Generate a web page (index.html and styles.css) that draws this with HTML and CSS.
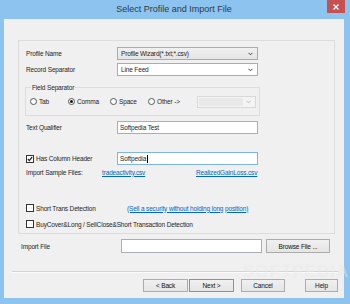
FILE: index.html
```html
<!DOCTYPE html>
<html>
<head>
<meta charset="utf-8">
<title>Select Profile and Import File</title>
<link rel="stylesheet" href="styles.css">
</head>
<body>
<div class="window">
  <div class="titlebar">
    <span class="title">Select Profile and Import File</span>
    <div class="close"><svg width="6" height="6" viewBox="0 0 6 6"><path d="M0.5 0.5 L5.5 5.5 M5.5 0.5 L0.5 5.5" stroke="#fff" stroke-width="1.4"/></svg></div>
  </div>
  <div class="client">
    <div class="group">
      <div class="row r1">
        <span class="lbl">Profile Name</span>
        <div class="select gray"><span>Profile Wizard(*.txt;*.csv)</span><svg class="chev" width="5" height="4" viewBox="0 0 5 4"><path d="M0.5 0.8 L2.5 2.8 L4.5 0.8" fill="none" stroke="#444" stroke-width="1"/></svg></div>
      </div>
      <div class="row r2">
        <span class="lbl">Record Separator</span>
        <div class="select"><span>Line Feed</span><svg class="chev" width="5" height="4" viewBox="0 0 5 4"><path d="M0.5 0.8 L2.5 2.8 L4.5 0.8" fill="none" stroke="#444" stroke-width="1"/></svg></div>
      </div>
      <div class="fs">
        <span class="legend">Field Separator</span>
        <div class="radios">
          <div class="ritem w-tab"><span class="radio"></span><span>Tab</span></div>
          <div class="ritem w-comma"><span class="radio on"></span><span>Comma</span></div>
          <div class="ritem w-space"><span class="radio"></span><span>Space</span></div>
          <div class="ritem w-other"><span class="radio"></span><span>Other -&gt;</span></div>
          <div class="dcombo"><span class="dfield"></span><svg class="chev" width="5" height="4" viewBox="0 0 5 4"><path d="M0.5 0.8 L2.5 2.8 L4.5 0.8" fill="none" stroke="#b8b8b8" stroke-width="1"/></svg></div>
        </div>
      </div>
      <div class="row r3">
        <span class="lbl">Text Qualifier</span>
        <div class="input">Softpedia Test</div>
      </div>
      <div class="row r4">
        <span class="lbl chk-lbl"><span class="check on"><svg width="6" height="6" viewBox="0 0 6 6"><path d="M0.8 3 L2.3 4.6 L5.2 1" fill="none" stroke="#222" stroke-width="1.2"/></svg></span>Has Column Header</span>
        <div class="input focus">Softpedia<span class="caret"></span></div>
      </div>
      <div class="row samples">
        <span class="lbl">Import Sample Files:</span>
        <a class="link">tradeactivity.csv</a>
        <a class="link">RealizedGainLoss.csv</a>
      </div>
      <div class="row short">
        <span class="lbl chk-lbl"><span class="check"></span>Short Trans Detection</span>
        <a class="link">(Sell a security without holding long position)</a>
      </div>
      <div class="row buy">
        <span class="lbl chk-lbl"><span class="check"></span>BuyCover&amp;Long / SellClose&amp;Short Transaction Detection</span>
      </div>
    </div>
    <div class="filerow">
      <span class="lbl">Import File</span>
      <div class="input"></div>
      <div class="btn">Browse File ...</div>
    </div>
    <div class="sep"></div>
    <div class="buttons">
      <div class="btn b-back">&lt; Back</div>
      <div class="btn b-next default">Next &gt;</div>
      <div class="btn b-cancel">Cancel</div>
      <div class="btn b-help">Help</div>
    </div>
  </div>
  <div class="watermark">SOFTPEDIA</div>
</div>
</body>
</html>
```

FILE: styles.css
```css
* { box-sizing: border-box; }
html, body { margin: 0; padding: 0; }
body {
  font-family: "Liberation Sans", Arial, sans-serif;
  font-size: 6.5px;
  letter-spacing: -0.15px;
  color: #1e1e1e;
  background: #8cc3ef;
}
.window {
  width: 350px;
  height: 304px;
  background: #8cc3ef;
  display: flex;
  flex-direction: column;
  padding: 0 6px 6px 4px;
  position: relative;
  overflow: hidden;
}
.titlebar {
  height: 19px;
  flex: none;
  display: flex;
  align-items: center;
  justify-content: center;
  position: relative;
}
.title {
  font-size: 9px;
  letter-spacing: 0;
  color: #2e3a46;
  margin-top: -1px;
}
.close {
  position: absolute;
  top: 0;
  right: -1px;
  width: 18px;
  height: 13px;
  background: #c75050;
  display: flex;
  align-items: center;
  justify-content: center;
}
.client {
  flex: 1;
  background: #f0f0f0;
  padding-top: 21px;
  display: flex;
  flex-direction: column;
}
.group {
  margin-left: 14px;
  width: 317px;
  height: 194px;
  border: 1px solid #dcdcdc;
  flex: none;
}
.row {
  display: grid;
  grid-template-columns: 91px 141px;
  align-items: center;
  height: 13px;
  margin-left: 7px;
}
.r1 { margin-top: 6px; }
.r2 { margin-top: 3px; }
.r3 { margin-top: 5px; }
.r4 { margin-top: 18px; }
.samples {
  margin-top: 1px;
  height: 12px;
  grid-template-columns: 76px 94px auto;
}
.short {
  margin-top: 24px;
  height: 12px;
  grid-template-columns: 101px auto;
}
.buy {
  margin-top: 4px;
  height: 12px;
  grid-template-columns: auto;
}
.lbl { white-space: nowrap; }
.chk-lbl { display: flex; align-items: center; }
.select {
  height: 13px;
  border: 1px solid #acacac;
  background: #fff;
  display: flex;
  align-items: center;
  justify-content: space-between;
  padding: 0 4px 0 3px;
}
.select.gray { background: linear-gradient(#f0f0f0, #e5e5e5); }
.chev { display: block; }
.fs {
  position: relative;
  margin-top: 11px;
  margin-left: 6px;
  width: 235px;
  height: 29px;
  border: 1px solid #dcdcdc;
}
.legend {
  position: absolute;
  top: -4px;
  left: 5px;
  background: #f0f0f0;
  padding: 0 1px;
  line-height: 7px;
}
.radios {
  height: 100%;
  display: flex;
  align-items: center;
  padding-left: 4px;
}
.ritem { display: flex; align-items: center; flex: none; }
.w-tab { width: 38px; }
.w-comma { width: 42px; }
.w-space { width: 38px; }
.w-other { width: 49px; }
.radio {
  width: 7px;
  height: 7px;
  border-radius: 50%;
  border: 1px solid #555;
  background: #fff;
  margin-right: 2px;
  display: flex;
  align-items: center;
  justify-content: center;
  flex: none;
}
.radio.on::after {
  content: "";
  width: 3px;
  height: 3px;
  border-radius: 50%;
  background: #111;
}
.dcombo {
  width: 59px;
  height: 12px;
  border: 1px solid #d9d9d9;
  background: #f4f4f4;
  display: flex;
  align-items: center;
  justify-content: space-between;
  padding: 0 4px 0 1px;
}
.dfield {
  width: 44px;
  height: 8px;
  background: #e8e8e8;
}
.input {
  height: 13px;
  border: 1px solid #abadb3;
  background: #fff;
  display: flex;
  align-items: center;
  padding-left: 2px;
  white-space: nowrap;
}
.input.focus { border-color: #7eb4ea; }
.caret {
  width: 1px;
  height: 8px;
  background: #000;
  margin-left: 0.5px;
}
.check {
  width: 8px;
  height: 8px;
  border: 1px solid #333;
  background: #fff;
  margin-right: 2px;
  display: flex;
  align-items: center;
  justify-content: center;
  flex: none;
}
.check svg { display: block; }
.link {
  color: #0066cc;
  text-decoration: underline;
  white-space: nowrap;
}
.filerow {
  display: grid;
  grid-template-columns: 96px 141px 64px;
  column-gap: 4px;
  align-items: center;
  height: 14px;
  margin-top: 5px;
  margin-left: 17px;
}
.filerow .input { height: 14px; }
.btn {
  height: 14px;
  border: 1px solid #acacac;
  background: linear-gradient(#f0f0f0, #e5e5e5);
  display: flex;
  align-items: center;
  justify-content: center;
  white-space: nowrap;
  color: #111;
}
.btn.default { border-color: #569de5; }
.sep {
  margin-top: 18px;
  margin-left: 8px;
  width: 326px;
  height: 2px;
  border-top: 1px solid #d5d5d5;
  border-bottom: 1px solid #fbfbfb;
  flex: none;
}
.buttons {
  display: flex;
  margin-top: 6px;
  margin-left: 139px;
  height: 13px;
}
.buttons .btn { height: 13px; }
.b-back { width: 45px; }
.b-next { width: 45px; margin-left: 1px; }
.b-cancel { width: 44px; margin-left: 7px; }
.b-help { width: 33px; margin-left: 20px; }
.watermark {
  position: absolute;
  left: 243px;
  top: 262px;
  font-size: 17px;
  font-weight: bold;
  letter-spacing: 1px;
  color: rgba(255, 255, 255, 0.4);
  text-shadow: 0 0 1px rgba(0, 0, 0, 0.06);
  pointer-events: none;
}
```
